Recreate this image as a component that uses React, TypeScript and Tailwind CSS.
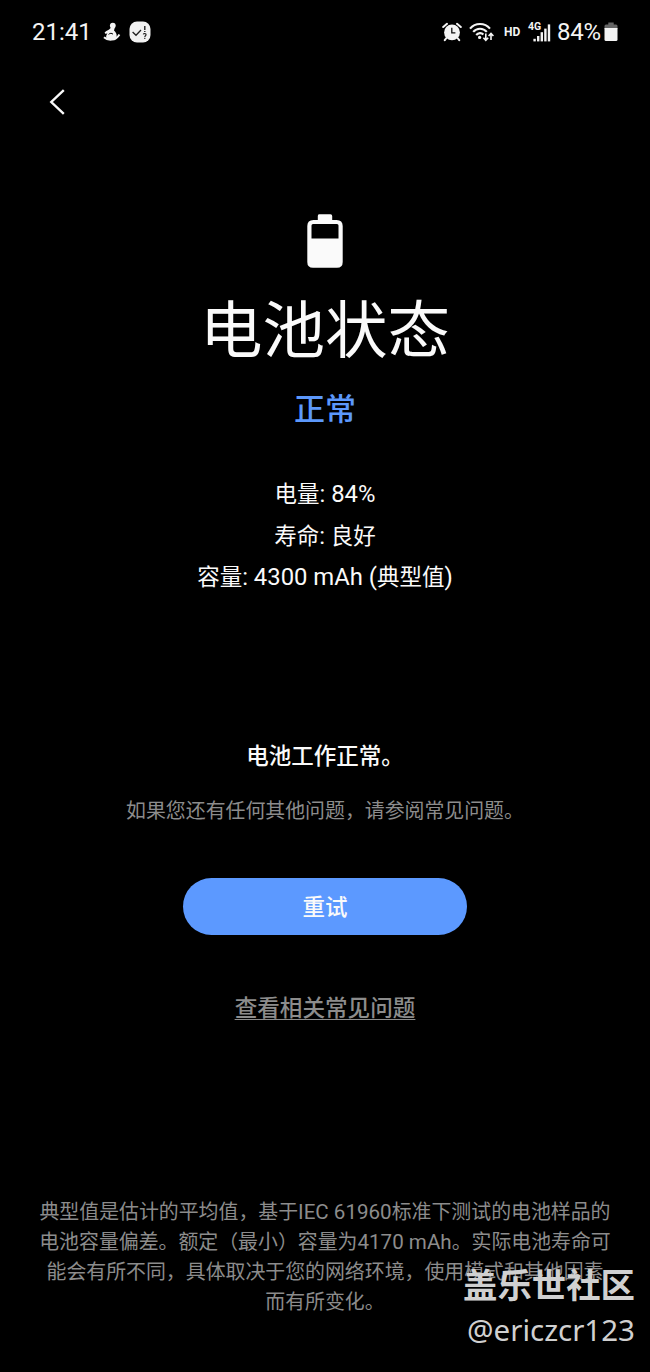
import React from "react";

const DETAILS = ["电量: 84%", "寿命: 良好", "容量: 4300 mAh (典型值)"];

const FOOTNOTE = [
  "典型值是估计的平均值，基于IEC 61960标准下测试的电池样品的",
  "电池容量偏差。额定（最小）容量为4170 mAh。实际电池寿命可",
  "能会有所不同，具体取决于您的网络环境，使用模式和其他因素",
  "而有所变化。",
];

// Latin runs are set slightly larger than the Chinese around them
function MixedText({ text, className }: { text: string; className: string }) {
  return (
    <>
      {text.split(/([\x20-\x7e]+)/).map((part, i) =>
        i % 2 === 1 ? (
          <span key={i} className={className}>
            {part}
          </span>
        ) : (
          part
        )
      )}
    </>
  );
}

function PersonIcon() {
  return (
    <svg width="18" height="20" viewBox="0 0 18 20" fill="#f4f4f4">
      <circle cx="9.8" cy="3.6" r="2.9" />
      <path d="M7.8 5.5 C7.2 7.6 3.8 8.4 1.6 10.4 L2.2 11.8 L4.4 11.4 C2.8 13.2 2.6 16 4.4 17.6 L12 17.8 C14 16.4 14 12.8 13 11 C12.4 9.6 11.6 9 11 8.4 L11.8 5.6 Z" />
      <path d="M1 15.2 C5 18.8 12.6 19 16.4 12.4" fill="none" stroke="#f4f4f4" strokeWidth="2" />
      <path d="M5.6 12.4 C7 11 8.8 11 10 12.2" fill="none" stroke="#000" strokeWidth="1" />
    </svg>
  );
}

function CheckBadgeIcon() {
  return (
    <svg width="22" height="22" viewBox="0 0 22 22">
      <rect x="0.5" y="0.5" width="21" height="21" rx="7.5" fill="#f2f2f2" />
      <path d="M3.6 11 L7 14.3 L12 9" fill="none" stroke="#222" strokeWidth="1.3" />
      <path d="M15.8 5 V9 M15.8 10 V11" stroke="#222" strokeWidth="1.4" />
      <path d="M14.3 13.4 C14.6 12.2 17.2 12.3 17.1 13.8 C17 14.8 15.8 14.8 15.8 16 M15.8 16.8 V18" fill="none" stroke="#222" strokeWidth="1.1" />
    </svg>
  );
}

function AlarmIcon() {
  return (
    <svg width="20" height="20" viewBox="0 0 20 20">
      <circle cx="10" cy="10.4" r="7.9" fill="#f4f4f4" />
      <path d="M1.2 5 L5 1.8 M18.8 5 L15 1.8 M4.4 16 L2.8 18.2 M15.6 16 L17.2 18.2" stroke="#f4f4f4" strokeWidth="2" strokeLinecap="round" />
      <path d="M9.8 5.8 V10.8 H13.4" fill="none" stroke="#111" strokeWidth="1.3" />
    </svg>
  );
}

function WifiIcon() {
  return (
    <svg width="26" height="20" viewBox="0 0 26 20" fill="none" stroke="#f4f4f4">
      <path d="M1 6.6 C6.2 0.4 15.8 0.4 21 6.6" strokeWidth="2.1" />
      <path d="M4.2 9.9 C7.8 5.6 14.2 5.6 17.8 9.9" strokeWidth="2.1" />
      <path d="M7.2 13 C9.3 10.6 12.4 10.5 14.4 12.4" strokeWidth="2.1" />
      <circle cx="10.6" cy="15.4" r="1.6" fill="#f4f4f4" stroke="none" />
      <path d="M16.8 11.4 V18 M14.4 15.8 L16.8 18.4 L19.2 15.8" strokeWidth="1.6" />
      <path d="M22 18 V12 M19.6 14 L22 11.4 L24.4 14" strokeWidth="1.6" />
    </svg>
  );
}

function SignalIcon() {
  return (
    <svg width="18" height="18" viewBox="0 0 18 18" fill="#f4f4f4">
      <rect x="0.4" y="14.8" width="2.4" height="2.6" />
      <rect x="4" y="12" width="2.4" height="5.4" />
      <rect x="7.6" y="8.2" width="2.4" height="9.2" />
      <rect x="11.2" y="4.6" width="2.4" height="12.8" />
      <rect x="14.8" y="0.4" width="2.4" height="17" />
    </svg>
  );
}

function SmallBatteryIcon() {
  return (
    <svg width="14" height="20" viewBox="0 0 14 20">
      <path d="M4.3 0.4 H9.7 V2.4 H12 Q13.5 2.4 13.5 4 V7 H0.5 V4 Q0.5 2.4 2 2.4 H4.3 Z" fill="#656565" />
      <path d="M0.5 6 H13.5 V17.5 Q13.5 19 12 19 H2 Q0.5 19 0.5 17.5 Z" fill="#f4f4f4" />
    </svg>
  );
}

function BatteryIcon() {
  return (
    <svg width="36" height="54" viewBox="0 0 36 54">
      <path
        fillRule="evenodd"
        fill="#fafafa"
        d="M12 0.2 H23.5 Q25.2 0.2 25.2 2 V6 H29.5 Q35.7 6 35.7 12 V48 Q35.7 53.8 30 53.8 H6 Q0.3 53.8 0.3 48 V12 Q0.3 6 6.5 6 H10.8 V2 Q10.8 0.2 12 0.2 Z M6 10 Q4.5 10 4.5 11.5 V24.5 H31.5 V11.5 Q31.5 10 30 10 Z"
      />
    </svg>
  );
}

function StatusBar() {
  return (
    <header className="flex h-16 items-center pl-8 pr-8 text-[#f4f4f4]">
      <span className="w-[60px] text-[24px] leading-none whitespace-nowrap">21:41</span>
      <div className="ml-[11px] flex items-center gap-[8px]">
        <PersonIcon />
        <CheckBadgeIcon />
      </div>
      <div className="ml-auto flex items-center">
        <AlarmIcon />
        <div className="ml-[7px]">
          <WifiIcon />
        </div>
        <span className="-mt-px ml-[9px] w-4 text-[12px] leading-none font-bold">HD</span>
        <div className="relative ml-[13px] mt-[2px]">
          <SignalIcon />
          <span className="absolute -left-[5px] -top-[2px] text-[10.5px] leading-none font-bold">4G</span>
        </div>
        <span className="ml-[6px] w-[47px] text-[24px] leading-none tracking-[-0.2px] whitespace-nowrap">84%</span>
        <SmallBatteryIcon />
      </div>
    </header>
  );
}

export default function App() {
  return (
    <div className="relative flex h-[1372px] w-[650px] flex-col overflow-hidden bg-black font-[Roboto,'Noto_Sans_CJK_SC',sans-serif] text-[#fafafa]">
      <StatusBar />

      <nav className="flex h-[76px] items-center pl-[48px]">
        <button type="button" aria-label="返回">
          <svg width="18" height="28" viewBox="0 0 18 28" fill="none" stroke="#fafafa" strokeWidth="2.4">
            <path d="M15.8 2.2 L3.3 14 L15.8 25.8" />
          </svg>
        </button>
      </nav>

      <main className="flex flex-col items-center whitespace-nowrap">
        <div className="mt-[74px] h-[54px]">
          <BatteryIcon />
        </div>
        <h1 className="mt-[24px] text-[62.5px] leading-[80px]">电池状态</h1>
        <p className="mt-[18px] text-[31px] leading-10 font-medium text-[#5c98fb]">正常</p>

        <ul className="mt-[44px] text-center text-[22.5px] leading-[41.5px]">
          {DETAILS.map((line) => (
            <li key={line}>
              <MixedText text={line} className="text-[1.06em] leading-none" />
            </li>
          ))}
        </ul>

        <p className="mt-[142px] text-[22.5px] leading-[30px] font-medium">电池工作正常。</p>
        <p className="mt-[26px] text-[19.9px] leading-[30px] text-[#8c8c8c]">
          如果您还有任何其他问题，请参阅常见问题。
        </p>

        <button
          type="button"
          className="mt-[51px] h-[57px] w-[284px] rounded-full bg-[#5c99ff] pt-[3px] text-[22.5px] font-medium"
        >
          重试
        </button>
        <a className="mt-[58px] text-[22.6px] leading-8 font-medium text-[#8c8c8c] underline decoration-1 underline-offset-[3px]">
          查看相关常见问题
        </a>

        <div className="mt-[173px] text-center text-[19.9px] leading-[30px] text-[#8c8c8c]">
          {FOOTNOTE.map((line) => (
            <p key={line}>
              <MixedText text={line} className="text-[1.035em] leading-none" />
            </p>
          ))}
        </div>
      </main>

      {/* 水印 */}
      <div className="absolute right-[15px] bottom-[20px] flex flex-col items-end whitespace-nowrap text-[#d0d0d0]">
        <span className="text-[34.4px] leading-[44px] font-bold">盖乐世社区</span>
        <span className="font-['Noto_Sans',sans-serif] text-[29.5px] leading-[44px]">@ericzcr123</span>
      </div>
    </div>
  );
}
